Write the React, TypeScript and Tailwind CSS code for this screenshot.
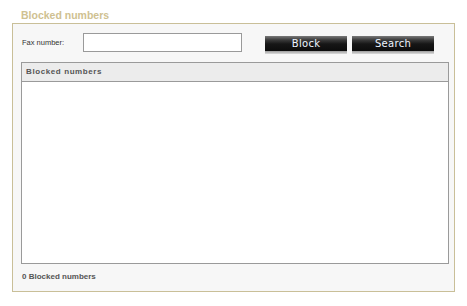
export default function App() {
  return (
    <div className="w-[467px] h-[306px] bg-white font-['Liberation_Sans',Arial,sans-serif]">
      <div className="pt-[9px] pl-[21px] h-[23px]">
        <h1 className="text-[10.5px] leading-[12px] font-bold text-[#cfc191]">Blocked numbers</h1>
      </div>

      <div className="ml-[12px] w-[443px] h-[269px] border border-[#c9bf98] bg-[#f7f7f7] pl-[8px] pt-[9px]">
        <div className="flex items-start h-[19px]">
          <label
            htmlFor="fax"
            className="ml-[1px] w-[61px] pt-[5px] text-[7.5px] leading-[9px] text-[#333]"
          >
            Fax number:
          </label>
          <input
            id="fax"
            type="text"
            className="w-[159px] h-[19px] border border-[#9a9a9a] bg-white outline-none"
          />
          <button className="ml-[23px] mt-[3px] w-[82px] h-[18px] bg-[linear-gradient(to_bottom,#7a7a7a_0px,#3a3a3a_4px,#161616_8px,#0c0c0c_15px,#9c9c9c_15px,#dcdcdc_18px)] text-[10px] leading-[15px] text-[#eef4ff] font-['DejaVu_Sans',sans-serif] tracking-[0.3px] pb-[3px] flex items-start justify-center">
            Block
          </button>
          <button className="ml-[5px] mt-[3px] w-[82px] h-[18px] bg-[linear-gradient(to_bottom,#7a7a7a_0px,#3a3a3a_4px,#161616_8px,#0c0c0c_15px,#9c9c9c_15px,#dcdcdc_18px)] text-[10px] leading-[15px] text-[#eef4ff] font-['DejaVu_Sans',sans-serif] tracking-[0.3px] flex items-start justify-center">
            Search
          </button>
        </div>

        <div className="mt-[10px] w-[428px] h-[202px] border border-[#9a9a9a] bg-white flex flex-col">
          <div className="h-[19px] bg-[#ececec] border-b border-[#9a9a9a] pl-[4px] flex items-center">
            <span className="text-[8px] font-bold tracking-[0.6px] text-[#555]">Blocked numbers</span>
          </div>
          <div className="flex-1" />
        </div>

        <p className="mt-[8px] ml-[1px] text-[8px] leading-[10px] font-bold text-[#555]">0 Blocked numbers</p>
      </div>
    </div>
  );
}
